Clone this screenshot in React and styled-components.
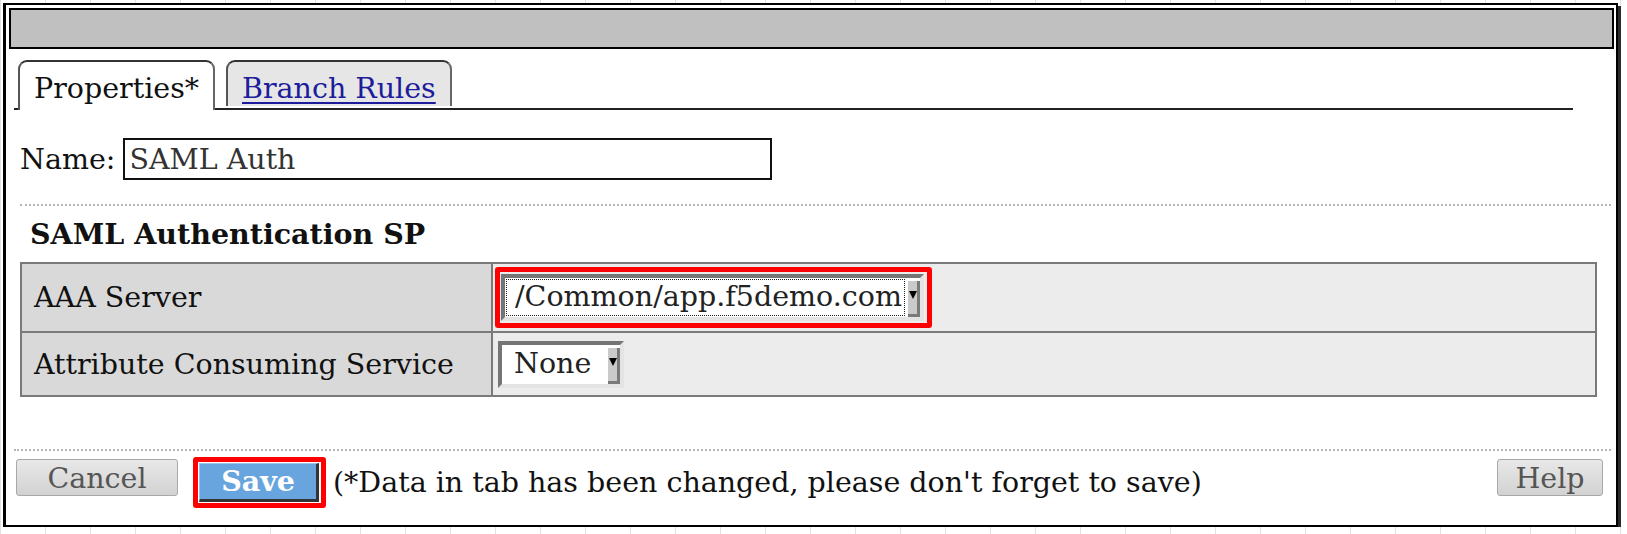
import React from "react";
import styled, { createGlobalStyle } from "styled-components";

const GlobalStyle = createGlobalStyle`
    html, body {
        margin: 0;
        padding: 0;
    }
    body {
        background-color: #ffffff;
        background-image: repeating-linear-gradient(90deg, #e2e2e2 0 1px, transparent 1px 45px);
        font-family: "DejaVu Serif", "Liberation Serif", serif;
        font-size: 28.5px;
        color: #111;
    }
`;

const Frame = styled.div`
    box-sizing: border-box;
    width: 1615px;
    height: 524px;
    margin: 3px 0 0 3px;
    background: #fff;
    border: 2px solid #000;
    border-left-width: 3px;
    box-shadow: 3px 3px 0 #2b2b2b;
    display: flex;
    flex-direction: column;
`;

const TitleBar = styled.div`
    box-sizing: border-box;
    height: 41px;
    margin: 3px 2px 0 3px;
    background: #c0c0c0;
    border: 2px solid #000;
`;

const Body = styled.div`
    display: flex;
    flex-direction: column;
    padding: 0 5px 0 8px;
    flex: 1;
`;

const TabBar = styled.div`
    box-sizing: border-box;
    display: flex;
    align-items: flex-end;
    gap: 11px;
    width: 1559px;
    height: 50px;
    margin-top: 11px;
    padding-left: 4px;
    border-bottom: 2px solid #222;
`;

const Tab = styled.div`
    box-sizing: border-box;
    height: ${(p) => (p.active ? "50px" : "46px")};
    margin-bottom: ${(p) => (p.active ? "-2px" : "2px")};
    padding: 13px 14px 0 14px;
    display: flex;
    align-items: flex-start;
    background: ${(p) => (p.active ? "#fff" : "#e6e6e6")};
    border: 2px solid #333;
    border-left-color: #555;
    border-right-color: #666;
    border-bottom: none;
    border-radius: 9px 9px 0 0;
    line-height: 1;
`;

const TabLink = styled.a`
    color: #1c1c9c;
    text-decoration: underline;
    text-decoration-thickness: 2px;
    text-underline-offset: 4px;
`;

const NameRow = styled.div`
    display: flex;
    align-items: center;
    gap: 8px;
    margin: 28px 0 0 6px;
`;

const NameInput = styled.div`
    box-sizing: border-box;
    width: 649px;
    height: 42px;
    border: 2px solid #111;
    padding: 0 4px;
    display: flex;
    align-items: center;
    color: #333;
`;

const Dotted = styled.div`
    height: 0;
    margin: ${(p) => p.margin};
    border-top: 2px dotted #b5b5b5;
`;

const Heading = styled.div`
    font-weight: bold;
    line-height: 34px;
    margin: 11px 0 0 16px;
`;

const Table = styled.div`
    box-sizing: border-box;
    width: 1577px;
    margin: 11px 0 0 6px;
    border: 2px solid #7a7a7a;
    display: grid;
    grid-template-columns: 471px 1fr;
`;

const LabelCell = styled.div`
    box-sizing: border-box;
    height: ${(p) => p.h}px;
    background: #d9d9d9;
    border-right: 2px solid #7a7a7a;
    border-bottom: ${(p) => (p.last ? "none" : "2px solid #7a7a7a")};
    display: flex;
    align-items: center;
    padding-left: 12px;
`;

const ValueCell = styled.div`
    box-sizing: border-box;
    height: ${(p) => p.h}px;
    background: #ececec;
    border-bottom: ${(p) => (p.last ? "none" : "2px solid #7a7a7a")};
    display: flex;
    align-items: center;
    padding-left: ${(p) => p.pad}px;
`;

const Highlight = styled.div`
    box-sizing: border-box;
    border: 5px solid #ff0000;
    border-radius: 3px;
    padding: ${(p) => p.pad};
    margin-left: ${(p) => p.ml || 0}px;
    display: inline-flex;
    flex-shrink: 0;
`;

const Select = styled.div`
    box-sizing: border-box;
    height: ${(p) => p.h}px;
    display: flex;
    align-items: stretch;
    background: #fff;
    border: 4px solid;
    border-color: #757575 #e4e4e4 #e4e4e4 #757575;
`;

const SelectText = styled.div`
    display: flex;
    align-items: center;
    padding: 0 ${(p) => p.padR}px 0 ${(p) => p.padL}px;
    margin: 2px 4px 2px 2px;
    outline: ${(p) => (p.focus ? "1px dotted #222" : "none")};
    color: #222;
    line-height: 1;
`;

const Arrow = styled.div`
    box-sizing: border-box;
    width: 12px;
    margin: 3px 0 0 0;
    background: #cacaca;
    border-right: 3px solid #7a7a7a;
    border-bottom: 3px solid #7a7a7a;
    position: relative;
    &::after {
        content: "";
        position: absolute;
        left: 1px;
        top: 10px;
        border-left: 4px solid transparent;
        border-right: 4px solid transparent;
        border-top: 8px solid #000;
    }
`;

const Footer = styled.div`
    display: flex;
    align-items: flex-start;
    margin: 6px 0 0 2px;
    width: 1587px;
`;

const GreyButton = styled.div`
    box-sizing: border-box;
    flex-shrink: 0;
    margin-top: 2px;
    padding-top: 3px;
    height: 37px;
    width: ${(p) => p.w}px;
    border: 1px solid #a8a8a8;
    border-radius: 3px;
    background: linear-gradient(#e8e8e8, #d2d2d2);
    color: #555;
    display: flex;
    align-items: center;
    justify-content: center;
    line-height: 1;
`;

const SaveButton = styled.div`
    box-sizing: border-box;
    width: 120px;
    height: 39px;
    background: #68a4dd;
    border-top: 1px solid #9cc4ea;
    border-left: 1px solid #9cc4ea;
    border-right: 3px solid #333;
    border-bottom: 3px solid #333;
    color: #fff;
    font-weight: bold;
    display: flex;
    align-items: center;
    justify-content: center;
    line-height: 1;
`;

const Note = styled.span`
    align-self: center;
    margin-left: 7px;
    flex: 1;
    white-space: nowrap;
`;

const App = () => (
    <>
        <GlobalStyle />
        <Frame>
            <TitleBar />
            <Body>
                <TabBar>
                    <Tab active>Properties*</Tab>
                    <Tab>
                        <TabLink href="#">Branch Rules</TabLink>
                    </Tab>
                </TabBar>
                <NameRow>
                    <span>Name:</span>
                    <NameInput>SAML Auth</NameInput>
                </NameRow>
                <Dotted margin="24px 0 0 6px" />
                <Heading>SAML Authentication SP</Heading>
                <Table>
                    <LabelCell h={69}>AAA Server</LabelCell>
                    <ValueCell h={69} pad={2}>
                        <Highlight pad="2px 3px 2px 1px">
                            <Select h={47}>
                                <SelectText focus padL={8} padR={2}>/Common/app.f5demo.com</SelectText>
                                <Arrow />
                            </Select>
                        </Highlight>
                    </ValueCell>
                    <LabelCell h={62} last>Attribute Consuming Service</LabelCell>
                    <ValueCell h={62} last pad={5}>
                        <Select h={47}>
                            <SelectText padL={10} padR={13}>None</SelectText>
                            <Arrow />
                        </Select>
                    </ValueCell>
                </Table>
                <Dotted margin="52px 0 0 0" />
                <Footer>
                    <GreyButton w={162}>Cancel</GreyButton>
                    <Highlight pad="1px 2px 1px 1px" ml={15}>
                        <SaveButton>Save</SaveButton>
                    </Highlight>
                    <Note>(*Data in tab has been changed, please don't forget to save)</Note>
                    <GreyButton w={106}>Help</GreyButton>
                </Footer>
            </Body>
        </Frame>
    </>
);

export default App;
